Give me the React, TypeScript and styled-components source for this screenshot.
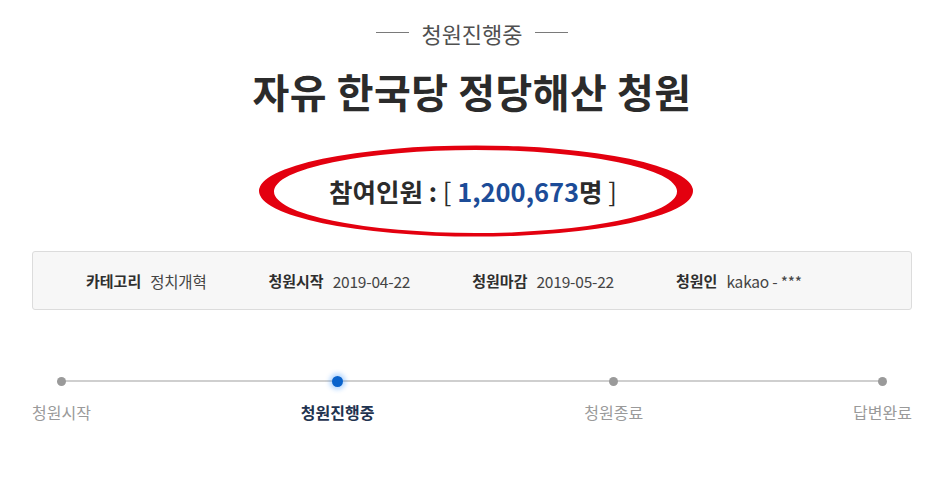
import { createGlobalStyle, styled } from 'styled-components';

const GlobalStyle = createGlobalStyle`
  html, body {
    margin: 0;
    padding: 0;
    background: #fff;
    font-family: 'Noto Sans CJK KR', 'Noto Sans', sans-serif;
  }
`;

const Page = styled.div`
  width: 880px;
  margin-left: 32px;
  padding-top: 20px;
`;

const Status = styled.div`
  display: flex;
  align-items: center;
  justify-content: center;
  gap: 12px;
  font-size: 22px;
  line-height: 26px;
  color: #505050;
  &::before,
  &::after {
    content: '';
    width: 33px;
    height: 1px;
    margin-top: -2px;
    background: #7a7a7a;
  }
`;

const Title = styled.h1`
  margin: 21px 0 0;
  text-align: center;
  font-size: 40px;
  line-height: 48px;
  font-weight: 700;
  letter-spacing: 0.5px;
  color: #2b2b2b;
`;

const CountWrap = styled.div`
  position: relative;
  height: 92px;
  margin-top: 30px;
  display: flex;
  align-items: center;
  justify-content: center;
  padding-left: 2px;
`;

const Ellipse = styled.svg`
  position: absolute;
  left: 50%;
  top: 0;
  margin-left: -216px;
`;

const Count = styled.div`
  font-size: 25.5px;
  line-height: 36px;
  font-weight: 700;
  color: #2b2b2b;
`;

const Bracket = styled.span`
  font-weight: 400;
`;

const Num = styled.span`
  color: #1c4c98;
`;

const InfoBox = styled.div`
  margin-top: 14px;
  height: 57px;
  border: 1px solid #dcdcdc;
  border-radius: 3px;
  background: #f7f7f7;
  display: flex;
  align-items: center;
  gap: 62px;
  padding-left: 53px;
`;

const InfoItem = styled.div`
  display: flex;
  gap: 9px;
  align-items: center;
`;

const InfoLabel = styled.span`
  font-size: 15px;
  font-weight: 700;
  color: #2f2f2f;
`;

const InfoValue = styled.span`
  font-size: 15.5px;
  color: #444;
  letter-spacing: -0.2px;
`;

const Steps = styled.div`
  position: relative;
  margin-top: 66px;
  display: flex;
  justify-content: space-between;
  &::before {
    content: '';
    position: absolute;
    top: 4px;
    left: 29px;
    right: 29px;
    height: 1.5px;
    background: #cfcfcf;
  }
`;

const Step = styled.div`
  position: relative;
  display: flex;
  flex-direction: column;
  align-items: center;
  gap: 15px;
`;

const Dot = styled.span<{ $active?: boolean }>`
  width: ${(p) => (p.$active ? 11 : 9)}px;
  height: ${(p) => (p.$active ? 11 : 9)}px;
  margin-top: ${(p) => (p.$active ? 0 : 1)}px;
  margin-bottom: ${(p) => (p.$active ? -1 : 0)}px;
  border-radius: 50%;
  background: ${(p) => (p.$active ? '#0a63cc' : '#9a9a9a')};
  box-shadow: ${(p) => (p.$active ? '0 0 4px 3px rgba(40, 140, 255, 0.3)' : 'none')};
`;

const StepLabel = styled.span<{ $active?: boolean }>`
  font-size: 16px;
  line-height: 22px;
  white-space: nowrap;
  font-weight: ${(p) => (p.$active ? 700 : 400)};
  color: ${(p) => (p.$active ? '#1f3350' : '#9a9a9a')};
`;

const info = [
  { label: '카테고리', value: '정치개혁' },
  { label: '청원시작', value: '2019-04-22' },
  { label: '청원마감', value: '2019-05-22' },
  { label: '청원인', value: 'kakao - ***' },
];

const steps = ['청원시작', '청원진행중', '청원종료', '답변완료'];

export default function App() {
  return (
    <>
      <GlobalStyle />
      <Page>
        <Status>청원진행중</Status>
        <Title>자유 한국당 정당해산 청원</Title>
        <CountWrap>
          <Ellipse width="440" height="94" viewBox="0 0 440 94">
            <path
              fillRule="evenodd"
              fill="#e3000f"
              d="M3 46 A217 45.5 0 1 0 437 46 A217 45.5 0 1 0 3 46 Z M18 46.5 A201.5 41.5 0 1 0 421 46.5 A201.5 41.5 0 1 0 18 46.5 Z"
            />
          </Ellipse>
          <Count>
            참여인원 : <Bracket>[</Bracket> <Num>1,200,673</Num>명 <Bracket>]</Bracket>
          </Count>
        </CountWrap>
        <InfoBox>
          {info.map((i) => (
            <InfoItem key={i.label}>
              <InfoLabel>{i.label}</InfoLabel>
              <InfoValue>{i.value}</InfoValue>
            </InfoItem>
          ))}
        </InfoBox>
        <Steps>
          {steps.map((s, idx) => (
            <Step key={s}>
              <Dot $active={idx === 1} />
              <StepLabel $active={idx === 1}>{s}</StepLabel>
            </Step>
          ))}
        </Steps>
      </Page>
    </>
  );
}
